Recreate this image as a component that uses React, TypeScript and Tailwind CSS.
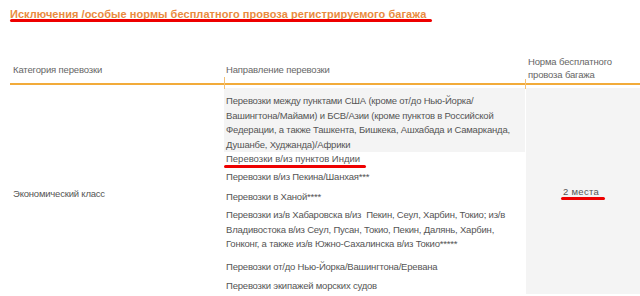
import React from "react";

const body = "text-[9.5px] tracking-[-0.2px] leading-[14.5px] text-[#555] whitespace-nowrap";
const head = "text-[9.5px] tracking-[-0.15px] text-[#666]";

export default function App() {
  return (
    <div className="w-[640px] h-[296px] bg-white overflow-hidden relative" style={{ fontFamily: "'Liberation Sans', Arial, sans-serif" }}>
      <div className="pt-[5px] pl-[10px] h-[55px]">
        <div className="relative w-fit leading-[15px]">
          <span className="text-[11px] font-bold text-[#e98a3e] tracking-[0.05px]">
            Исключения /особые нормы бесплатного провоза регистрируемого багажа
          </span>
          <div className="absolute left-0 right-[-6px] top-[14px] h-[3px] rounded-full bg-[#ee0000]" />
        </div>
      </div>
      <div className="flex ml-[10px] border-b-2 border-[#f2ab3a] h-[30px] relative">
        <div className={`w-[214px] flex items-center pl-[3px] pt-[2px] ${head}`}>Категория перевозки</div>
        <div className={`w-[301px] flex items-center pl-[2px] pt-[2px] relative ${head}`}>
          <div className="absolute left-0 top-[22px] h-[12px] w-px bg-[#f2c27a]" />
          Направление перевозки
        </div>
        <div className={`flex-1 flex items-end pb-[2px] pl-[3px] leading-[13px] relative ${head}`}>
          <div className="absolute left-0 top-[24px] h-[10px] w-px bg-[#f2c27a]" />
          Норма бесплатного<br />провоза багажа
        </div>
      </div>
      <div className="flex mt-[3px]">
        <div className={`w-[224px] flex items-center pl-[13px] pt-[6px] ${body}`}>Экономический класс</div>
        <div className="w-[301px] flex flex-col overflow-hidden">
          <div className={`bg-[#f4f4f4] pl-[2px] pt-[6px] pb-0 ${body}`}>
            Перевозки между пунктами США (кроме от/до Нью-Йорка/<br />
            Вашингтона/Майами) и БСВ/Азии (кроме пунктов в Российской<br />
            Федерации, а также Ташкента, Бишкека, Ашхабада и Самарканда,<br />
            Душанбе, Худжанда)/Африки
          </div>
          <div className={`pl-[2px] ${body} flex flex-col`}>
            <div>
              <span className="relative tracking-[0px]">
                Перевозки в/из пунктов Индии
                <span className="absolute left-[-2px] right-[-6px] top-[12px] h-[3px] rounded-full bg-[#ee0000]" />
              </span>
            </div>
            <div className="mt-[3.5px]">Перевозки в/из Пекина/Шанхая***</div>
            <div className="mt-[5.5px]">Перевозки в Ханой****</div>
            <div className="mt-[3.5px]">
              Перевозки из/в Хабаровска в/из&nbsp; Пекин, Сеул, Харбин, Токио; из/в<br />
              Владивостока в/из Сеул, Пусан, Токио, Пекин, Далянь, Харбин,<br />
              Гонконг, а также из/в Южно-Сахалинска в/из Токио*****
            </div>
            <div className="mt-[8.5px]">Перевозки от/до Нью-Йорка/Вашингтона/Еревана</div>
            <div className="mt-[4.5px]">Перевозки экипажей морских судов</div>
          </div>
        </div>
        <div className={`flex-1 bg-[#f4f4f4] ml-px flex items-center justify-start pl-[37px] pt-[2px] ${body}`}>
          <span className="relative tracking-[0.3px]">
            2 места
            <span className="absolute left-[-2px] right-[-6px] top-[12px] h-[3px] rounded-full bg-[#ee0000]" />
          </span>
        </div>
      </div>
    </div>
  );
}
